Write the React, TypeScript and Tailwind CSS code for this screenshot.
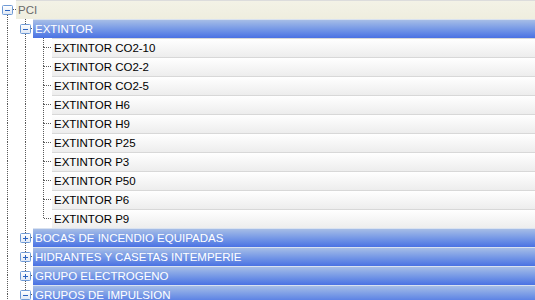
import React from 'react';

type Box = 'plus' | 'minus' | null;

const DOT = '#5a5a5a';

const TreeCell = ({
  width,
  lineX,
  top = false,
  bottom = false,
  right = false,
  box = null,
}: {
  width: number;
  lineX: number;
  top?: boolean;
  bottom?: boolean;
  right?: boolean;
  box?: Box;
}) => {
  const x = lineX + 0.5;
  return (
    <svg width={width} height={19} className="shrink-0 block">
      {top && <line x1={x} y1={0} x2={x} y2={box ? 5 : 10} stroke={DOT} strokeDasharray="1 1" />}
      {bottom && <line x1={x} y1={box ? 15 : 9} x2={x} y2={19} stroke={DOT} strokeDasharray="1 1" />}
      {right && <line x1={box ? lineX + 6 : lineX + 1} y1={9.5} x2={width} y2={9.5} stroke={DOT} strokeDasharray="1 1" />}
      {box && (
        <g>
          <defs>
            <linearGradient id="bx" x1="0" y1="0" x2="0" y2="1">
              <stop offset="0" stopColor="#ffffff" />
              <stop offset="1" stopColor="#dfe8f5" />
            </linearGradient>
          </defs>
          <rect x={lineX - 4.5} y={5.5} width={10} height={9} fill="url(#bx)" stroke="#6f9ad6" rx={1} />
          <line x1={lineX - 2} y1={10.5} x2={lineX + 3} y2={10.5} stroke="#2a62bf" />
          {box === 'plus' && <line x1={x} y1={8} x2={x} y2={13} stroke="#2a62bf" />}
        </g>
      )}
    </svg>
  );
};

const leaves = [
  'EXTINTOR CO2-10',
  'EXTINTOR CO2-2',
  'EXTINTOR CO2-5',
  'EXTINTOR H6',
  'EXTINTOR H9',
  'EXTINTOR P25',
  'EXTINTOR P3',
  'EXTINTOR P50',
  'EXTINTOR P6',
  'EXTINTOR P9',
];

const groups: { label: string; box: Box }[] = [
  { label: 'BOCAS DE INCENDIO EQUIPADAS', box: 'plus' },
  { label: 'HIDRANTES Y CASETAS INTEMPERIE', box: 'plus' },
  { label: 'GRUPO ELECTROGENO', box: 'plus' },
  { label: 'GRUPOS DE IMPULSION', box: 'minus' },
];

const GroupRow = ({ label, box }: { label: string; box: Box }) => (
  <div className="flex h-[19px]">
    <TreeCell width={16} lineX={7} top bottom />
    <TreeCell width={17} lineX={9} top bottom right box={box} />
    <div className="flex-1 border-t border-[#d9e2f0] bg-gradient-to-b from-[#a6bde6] to-[#4a71e3] pl-[2px] text-white leading-[18px]">
      {label}
    </div>
  </div>
);

export default function App() {
  return (
    <div className="w-[535px] h-[300px] overflow-hidden bg-white text-[11.5px] font-['Liberation_Sans',Arial,sans-serif]">
      <div className="flex h-[19px]">
        <TreeCell width={16} lineX={7} bottom right box="minus" />
        <div className="flex-1 border-t border-[#dcdcdc] bg-gradient-to-b from-[#f3f2e6] to-[#efeedf] pl-[2px] text-[#6a6a6a] leading-[18px]">
          PCI
        </div>
      </div>
      <GroupRow label="EXTINTOR" box="minus" />
      {leaves.map((l, i) => (
        <div key={l} className="flex h-[19px]">
          <TreeCell width={16} lineX={7} top bottom />
          <TreeCell width={17} lineX={9} top bottom />
          <TreeCell width={19} lineX={10} top bottom={i < leaves.length - 1} right />
          <div className="flex-1 border-t border-[#d8d8d8] bg-gradient-to-b from-[#ffffff] to-[#ededed] pl-[2px] text-black leading-[18px]">
            {l}
          </div>
        </div>
      ))}
      {groups.map((g) => (
        <GroupRow key={g.label} label={g.label} box={g.box} />
      ))}
    </div>
  );
}
